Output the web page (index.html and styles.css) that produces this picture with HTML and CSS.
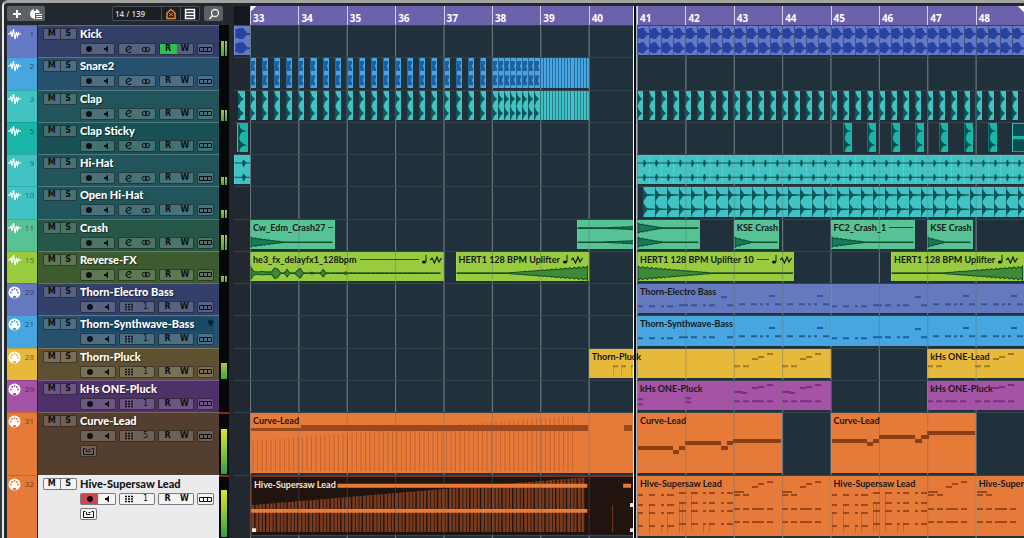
FILE: index.html
```html
<!DOCTYPE html>
<html lang="en">
<head>
    <meta charset="UTF-8">
    <meta name="viewport" content="width=device-width, initial-scale=1.0">
    <title>Project</title>
    <link rel="stylesheet" href="styles.css">
</head>
<body>
    <main class="window">
        <!-- Track list -->
        <section class="panel">
            <div class="toolbar">
                <div class="tool-group">
                    <button class="tool" aria-label="Add track">
                        <svg width="12" height="12" viewBox="0 0 12 12"><path d="M6 2v8M2 6h8" stroke="#fff" stroke-width="2"/></svg>
                    </button>
                    <button class="tool" aria-label="Track presets">
                        <svg width="14" height="12" viewBox="0 0 14 12"><circle cx="6" cy="6" r="5" fill="#fff"/><path d="M5 0v3h2V0z" fill="#5d6163"/><path d="M6 5h8v7H6z" fill="#5d6163"/><path d="M7 6.500h6M7 8.500h6M7 10.500h6" stroke="#fff" stroke-width="1.200"/></svg>
                    </button>
                </div>
                <div class="visibility">
                    <span class="count">14 / 139</span>
                    <button class="tool dark" aria-label="Track visibility">
                        <svg width="12" height="12" viewBox="0 0 12 12"><path d="M2 10.500V5l4-3.500L10 5v5.500z" fill="none" stroke="#e8872c" stroke-width="1.500"/><path d="M4 8l4-3M4 5l4 3" stroke="#e8872c"/></svg>
                    </button>
                    <button class="tool dark" aria-label="Track list">
                        <svg width="12" height="12" viewBox="0 0 12 12"><path d="M1.500 1.500h9v9h-9zM2 4.500h8M2 7.500h8" fill="none" stroke="#fff" stroke-width="1.400"/></svg>
                    </button>
                </div>
                <button class="tool search" aria-label="Find tracks">
                    <svg width="12" height="12" viewBox="0 0 12 12"><circle cx="7" cy="5" r="3.500" fill="none" stroke="#eee" stroke-width="1.300"/><path d="M4.500 7.500L1.500 11" stroke="#eee" stroke-width="1.500"/></svg>
                </button>
            </div>
            <div class="rows" id="tracks"></div>
        </section>

        <!-- Arrangement -->
        <section class="arrange">
            <div class="ruler">
                <div class="ruler-start"></div>
                <ol class="bars" id="bars"></ol>
            </div>
            <div class="rows" id="lanes"></div>
            <div class="cursor-area"><div class="cursor" id="cursor"></div></div>
        </section>
    </main>
    <script src="app.js"></script>
</body>
</html>
```
FILE: styles.css
```css
* {
    box-sizing: border-box;
}
body {
    margin: 0;
    height: 100vh;
    overflow: hidden;
    background: #34383b;
    font-family: "Open Sans", "Noto Sans", sans-serif;
    font-weight: 700;
}
button {
    margin: 0;
    padding: 0;
    border: 0;
    background: none;
    color: inherit;
    font: inherit;
    cursor: pointer;
    display: flex;
    align-items: center;
    justify-content: center;
}
svg {
    display: block;
}
.window {
    display: flex;
    gap: 5px;
    height: 100vh;
    margin-left: 2px;
    padding: 3px 0 0 3px;
    background: #22282f;
    border-top: 3px solid #a3a49f;
    border-left: 2px solid #e6e8e8;
    border-top-left-radius: 6px;
}
.panel,
.arrange {
    display: flex;
    flex-direction: column;
}
.panel {
    width: 222px;
    flex: none;
}
.arrange {
    flex: 1;
    min-width: 0;
    position: relative;
}
.rows {
    flex: 1;
    min-height: 0;
    display: grid;
    grid-template-rows: repeat(12, minmax(0, 1fr)) 63px 63px;
}

/* Toolbar */
.toolbar {
    height: 19px;
    display: flex;
    align-items: flex-start;
}
.tool-group,
.visibility {
    display: flex;
    height: 15px;
    border-radius: 2px;
}
.tool-group {
    width: 38px;
    background: #5d6163;
}
.tool {
    flex: 1;
    height: 15px;
}
.visibility {
    width: 88px;
    margin-left: auto;
    border: 1px solid #4b5054;
    background: #1b1f23;
}
.visibility .tool {
    height: 13px;
    border-left: 1px solid #4b5054;
}
.count {
    width: 48px;
    padding-left: 2px;
    color: #d5d8da;
    font-size: 8px;
    font-weight: 600;
    line-height: 13px;
}
.search {
    flex: none;
    width: 19px;
    margin: 0 6px 0 4px;
    background: #5d6163;
    border-radius: 2px;
}

/* Track colours */
.kick { --clip: #6679c4; --head: #333f67; --ink: #2743a0; }
.sky { --clip: #47a5df; --head: #26506b; --ink: #1b5fa5; }
.aqua { --clip: #42c3c3; --head: #21545b; --ink: #0d5558; }
.teal { --clip: #19b7a9; --head: #195256; --ink: #0a4d4d; }
.mint { --clip: #57c293; --head: #265647; --ink: #187a58; }
.lime { --clip: #98cb3e; --head: #3d5b2f; --ink: #3f8a35; }
.indigo { --clip: #6579be; --head: #33406a; --ink: #3a4fa0; }
.amber { --clip: #e6b93a; --head: #5d5131; --ink: #a07a26; }
.violet { --clip: #a553a5; --head: #4d3168; --ink: #7b2f84; }
.orange { --clip: #e67a39; --head: #543e2f; --ink: #9c481d; }

/* Track header */
.track {
    display: grid;
    grid-template-columns: 30px 1px minmax(0, 1fr) 10px;
    min-height: 0;
    overflow: hidden;
}
.strip {
    display: flex;
    justify-content: space-between;
    padding: 2px 3px 0 1px;
    background: var(--clip);
    border-top: 1px solid rgba(0, 0, 0, 0.15);
    color: rgba(0, 0, 0, 0.55);
    font-size: 8px;
    font-weight: 400;
    line-height: 12px;
}
.info {
    grid-column: 3;
    display: grid;
    grid-template-columns: 34px minmax(0, 1fr);
    column-gap: 3px;
    align-content: start;
    padding: 1px 5px 0 5px;
    background: var(--head);
    border-top: 1px solid rgba(255, 255, 255, 0.22);
    color: #fff;
}
.mute-solo {
    display: flex;
    height: 12px;
    margin-top: 1px;
    background: rgba(255, 255, 255, 0.18);
    border: 1px solid rgba(0, 0, 0, 0.5);
    border-radius: 2px;
    color: #0d1114;
}
.mute-solo button {
    flex: 1;
    font-family: "DejaVu Sans", sans-serif;
    font-size: 8px;
    line-height: 10px;
}
.mute-solo button + button {
    border-left: 1px solid rgba(0, 0, 0, 0.5);
}
.name {
    display: flex;
    justify-content: space-between;
    height: 15px;
    font-family: Lato, "Open Sans", sans-serif;
    font-size: 11px;
    font-weight: 900;
    line-height: 13px;
    white-space: nowrap;
    text-shadow: 1px 1px 1px rgba(0, 0, 0, 0.5);
}
.name.hover {
    padding-right: 1px;
    background: rgba(0, 60, 100, 0.35);
}
.arrow {
    color: #0c1a24;
    font-family: "DejaVu Sans", sans-serif;
    font-size: 7px;
}
.controls {
    grid-column: 2;
    display: flex;
    gap: 3px;
    margin-top: 1px;
}
.group {
    display: flex;
    width: 36px;
    height: 12px;
    background: rgba(255, 255, 255, 0.18);
    border: 1px solid rgba(0, 0, 0, 0.5);
    border-radius: 2px;
    color: #0d1114;
    font-family: "DejaVu Sans", sans-serif;
    font-size: 8px;
    line-height: 10px;
}
.group button,
.group span {
    flex: 1;
    display: flex;
    align-items: center;
    justify-content: center;
}
.group span {
    font-weight: 400;
}
.group.wide {
    width: 38px;
}
.group.small {
    width: 17px;
}
.group .on {
    background: #2fc04c;
}
.group .armed {
    background: #d24550;
}
.extra {
    margin-top: 3px;
}
.selected .info {
    background: #ebebee;
    color: #14161a;
}
.selected .name {
    text-shadow: none;
}
.selected .group,
.selected .mute-solo {
    background: #f4f4f5;
}
.meter {
    display: flex;
    align-items: flex-end;
    gap: 1px;
    padding: 0 2px 1px;
    background: #050708;
}
.meter i {
    flex: 1;
    background: linear-gradient(#a5c92f, #3fa745);
}
.meter.clipped {
    border-top: 2px solid #8b2a1c;
}
.meter.clipped i {
    background: linear-gradient(#dfe22c, #7fc436 55%, #2f9b48);
}

/* Ruler */
.ruler {
    display: flex;
    height: 19px;
}
.ruler-start {
    width: 16px;
    background: #14181c;
}
.bars {
    flex: 1;
    display: grid;
    grid-template-columns: repeat(16, minmax(0, 1fr));
    margin: 0;
    padding: 0;
    list-style: none;
    background: linear-gradient(135deg, #fff 4px, transparent 5px), linear-gradient(225deg, #fff 4px, transparent 5px), #6c61ab;
    color: #fff;
    font-size: 10px;
    line-height: 25px;
}
.bars li {
    padding-left: 2px;
    border-left: 1px solid #d5d0ea;
    height: 19px;
}

/* Lanes */
.lane {
    display: grid;
    grid-template-columns: 16px minmax(0, 1fr);
    min-height: 0;
    border-top: 1px solid #35444d;
}
.before,
.grid {
    padding: 0 0 2px;
    min-height: 0;
    overflow: hidden;
}
.before {
    display: flex;
    justify-content: flex-end;
}
.before .clip {
    width: 16px;
}
.before .clip.short {
    width: 7px;
    margin-right: 5px;
}
.before .clip.mid {
    width: 11px;
    margin-right: 2px;
}
.grid {
    position: relative;
    display: grid;
    grid-template-columns: repeat(256, minmax(0, 1fr));
    grid-template-rows: minmax(0, 1fr);
    background: linear-gradient(90deg, #74838c 1px, transparent 1px) 0 0 / calc(100% / 16) 100% #20313c;
}
.grid::after {
    content: "";
    position: absolute;
    inset: 0;
    background: linear-gradient(90deg, rgba(90, 105, 110, 0.4) 1px, transparent 1px) 0 0 / calc(100% / 16) 100%;
}
.clip {
    grid-row: 1;
    display: grid;
    grid-template-rows: minmax(0, 1fr);
    overflow: hidden;
    min-width: 0;
    background: var(--clip);
    box-shadow: inset 1px 0 rgba(255, 255, 255, 0.15);
    color: #15181a;
    font-family: Lato, "Open Sans", sans-serif;
    font-size: 9px;
    font-weight: 700;
    line-height: 16px;
    white-space: nowrap;
}
.clip.tile {
    box-shadow: inset 1px 0 rgba(0, 20, 60, 0.4);
}
.clip > svg,
.clip-label {
    grid-area: 1 / 1;
    min-width: 0;
}
.clip > svg {
    width: 100%;
    height: 100%;
    fill: var(--ink);
}
.clip .line {
    stroke: var(--ink);
    fill: none;
    stroke-width: 2;
}
.clip .thick {
    stroke: #8a3f18;
    fill: none;
    stroke-width: 4;
}
.clip .thin {
    stroke: var(--ink);
    fill: none;
    stroke-width: 1;
    opacity: 0.45;
}
.mint .clip > svg,
.lime .clip > svg {
    stroke: rgba(0, 50, 30, 0.75);
    stroke-width: 1;
}
.clip-label {
    display: flex;
    align-items: center;
    gap: 3px;
    align-self: start;
    height: 16px;
    padding: 0 2px 0 3px;
    z-index: 1;
}
.clip-label .rule {
    flex: 1;
    height: 1px;
    background: #24452f;
}
.clip-label svg {
    flex: none;
}
.clip.dark {
    background: #21140f;
    border: 1px solid #6d3519;
    color: #f7e6dc;
}

/* Project cursor */
.cursor-area {
    position: absolute;
    inset: 0 0 0 16px;
    pointer-events: none;
}
.cursor {
    position: absolute;
    top: 0;
    bottom: 0;
    width: 4px;
    border-left: 1px solid #fff;
    border-right: 1px solid #b4babd;
    background: #0a0c0e;
}
```
FILE: app.js
```js
// One column of the lane grid is a 16th note, drawn about 3px wide
const STEP = 3.023;

const audioIcon = '<svg width="13" height="12" viewBox="0 0 13 12"><path d="M0 6h2l1-2 1 5 1.500-8 1.500 10 1.500-7 1 4 1-3 .7 1H13" fill="none" stroke="#fff" stroke-width="1.200"/></svg>';
const midiIcon = '<svg width="13" height="13" viewBox="0 0 13 13"><circle cx="6.500" cy="6.500" r="6" fill="#fff"/><g fill="var(--clip)"><circle cx="3" cy="6.500" r=".9"/><circle cx="4.200" cy="4" r=".9"/><circle cx="6.500" cy="3" r=".9"/><circle cx="8.800" cy="4" r=".9"/><circle cx="10" cy="6.500" r=".9"/><path d="M5 10h3v2H5z"/></g></svg>';
const icons = {
    record: '<svg width="8" height="8" viewBox="0 0 8 8"><circle cx="4" cy="4" r="3" fill="#0d1114"/></svg>',
    monitor: '<svg width="8" height="8" viewBox="0 0 8 8"><path d="M2 3h1.500L6 .5v7L3.500 5H2z" fill="#0d1114"/></svg>',
    edit: '<svg width="9" height="9" viewBox="0 0 9 9"><path d="M7.500 6.500A3 3 0 1 1 7 2.200Q7.500 4 2.500 5.200" fill="none" stroke="#0d1114" stroke-width="1.100"/></svg>',
    stereo: '<svg width="10" height="7" viewBox="0 0 10 7"><circle cx="3.500" cy="3.500" r="2.200" fill="none" stroke="#0d1114"/><circle cx="6.500" cy="3.500" r="2.200" fill="none" stroke="#0d1114"/></svg>',
    pads: '<svg width="8" height="8" viewBox="0 0 8 8"><path d="M0 1.500h8M0 4h8M0 6.500h8" stroke="#0d1114" stroke-width="1.500" stroke-dasharray="2 1"/></svg>',
    lanes: '<svg width="13" height="7" viewBox="0 0 13 7"><path d="M.5 1.500h12v4H.5zM4.500 1v5M8.500 1v5" fill="none" stroke="#0d1114"/></svg>',
    chain: '<svg width="11" height="7" viewBox="0 0 11 7"><path d="M2.500 .5h-2v6h10v-6h-2M3.500 1v2.500h4M5.500 1.500h2" fill="none" stroke="#0d1114"/></svg>',
    note: '<svg width="5" height="9" viewBox="0 0 5 9"><ellipse cx="2" cy="7" rx="2" ry="1.500"/><path d="M4 7V0" stroke="#15181a"/></svg>',
    warp: '<svg width="12" height="9" viewBox="0 0 12 9"><path d="M0 5l2-2 2.500 5L7 2l2 5 2.500-4" fill="none" stroke="#15181a" stroke-width="1.200"/></svg>'
};

// Filled waveform from x0 to x1 around cy; amp(t) is the half height for t in 0..1
function wave(x0, x1, cy, amp) {
    let top = '', bottom = '';
    for (let x = x0, i = 0; x <= x1; x += 1.5, i++) {
        const a = Math.max(0.3, amp((x - x0) / (x1 - x0)) * (1 - (i % 3) * 0.12));
        top += `L${x.toFixed(1)} ${(cy - a).toFixed(1)}`;
        bottom = `L${x.toFixed(1)} ${(cy + a).toFixed(1)}` + bottom;
    }
    return `<path d="M${x0} ${cy}${top}${bottom}z"/>`;
}

// Notes as [x, y, width], shift moves them along the clip
function notes(list, cls = 'line', shift = 0) {
    return `<path class="${cls}" d="${list.map(([x, y, w]) => `M${x + shift} ${y}h${w}`).join('')}"/>`;
}

const tiles = {
    kick: '<path d="M1 3h2l1-1h3l1 2 2 3h2v2h-2l-2 2-1 2H4l-1-1H1zM1 17h2l1-1h3l1 2 2 3h2v2h-2l-2 2-1 2H4l-1-1H1z"/>',
    snare: '<path d="M1 3h4v3l-1 1v2l1 1v3H1zM1 17h4v3l-1 1v2l1 1v3H1z"/>',
    clap: '<path d="M0 2h1l1 3 3 3-3 3-1 3H0zM0 16h1l1 3 3 3-3 3-1 3H0z"/>',
    sticky: '<path d="M1 1h1l1 4 2 2 4 1-4 1-2 2-1 4 1 3 2 2 4 2-4 1-2 2-1 4H1z"/>',
    open: '<path d="M0 2l2 2 2 3 8 .5v1L4 9l-2 3-2 2zM0 16l2 2 2 3 8 .5v1L4 23l-2 3-2 2z"/>',
    hat: '<path d="M0 7.500h6l1-3 1 1 1 2h3v1H9l-1 2-1 2-1-4H0zM0 21.500h6l1-3 1 1 1 2h3v1H9l-1 2-1 2-1-4H0z"/>',
    flat: ''
};

function tile(kind, start, span, count, every) {
    return Array.from({ length: count }, (_, i) => ({ start: start + i * every, span, art: tiles[kind], tile: true, width: kind === 'sticky' ? 10 : span * 3 }));
}

const decay = t => 5 * Math.pow(1 - Math.min(1, t * 2.2), 1.2);
const crash = (w, cy = 22) => wave(1, w, cy, decay);
const riser = w => wave(1, w, 21, t => t < 0.35 ? 0.3 : 7 * (t - 0.35) / 0.65);
const delayFx = wave(1, 191, 21, t => {
    const hits = [[0, 6], [0.06, 3], [0.13, 7], [0.19, 4], [0.255, 6], [0.32, 2], [0.38, 4], [0.5, 2]];
    return Math.max(0.4, ...hits.map(([p, h]) => h - Math.abs(t - p) * 260), t < 0.15 ? 1.5 : 0);
});

const bassA = [[1, 22, 5], [12, 22, 6], [24, 22, 3], [30, 22, 6], [42, 21, 9], [54, 21, 6], [66, 21, 3], [72, 21, 6], [90, 21, 6]];
const bassB = [[6, 20, 6], [18, 20, 6], [27, 20, 3], [33, 20, 3], [36, 12, 6], [42, 20, 6]];
const bass = high => notes(bassA) + notes(bassB, 'line', 96) + notes(bassB, 'line', 144) + (high ? notes([[84, 13, 6]]) : '');
const steps = [[18, 10, 6], [24, 8, 6], [33, 5, 6]];
const pluck = [[0, 17, 6], [9, 17, 6], ...steps];
const kRun = [[0, 20, 6], [9, 20, 6], [18, 20, 12], [33, 20, 6], [18, 7, 6], [24, 6, 6], [33, 4, 6]];
const kChord = [[0, 11, 9], [7, 12, 6]];

const chords = [];
[[1, 5], [12, 6], [24, 3], [30, 7]].forEach(([x, w]) => [19, 29, 37, 50].forEach(y => chords.push([x, y, w])));
[[42, 7], [54, 7], [66, 3], [72, 6], [84, 3], [90, 6]].forEach(([x, w]) => [17, 27, 35, 48].forEach(y => chords.push([x, y, w])));
const tails = '<path class="thin" d="M1.500 37v20M12.500 29v28M24.500 50v7M30.500 37v20M42.500 27v30M45.500 27v28M54.500 17v38M66.500 48v9M72.500 46v10"/>';
const hiveRun = [[0, 16, 10], [0, 19, 6], [9, 19, 6]];
[33, 46].forEach(y => hiveRun.push([0, y, 6], [9, y, 6], [18, y, 12], [33, y, 6]));
const hiveSteps = [[18, 11, 6], [24, 8, 6], [33, 6, 6]];
const hive = notes(chords) + tails + notes(hiveRun.concat(hiveSteps), 'line', 97);

let curveBuild = '', hiveBuild = '';
for (let x = 3; x < 326; x += 4.5) {
    curveBuild += `M${x} ${(28 - x * 0.078).toFixed(1)}V58`;
}
for (let x = 1, i = 0; x < 334; x += 3.6, i++) {
    hiveBuild += `M${x.toFixed(1)} ${(29 - x * 0.086).toFixed(1)}V57h${i % 3 ? 2.8 : 2.2}V${(29 - x * 0.086).toFixed(1)}z`;
}

const tracks = [
    { no: 1, name: 'Kick', color: 'kick', level: 15, read: true, before: ['', tiles.kick, 12],
      clips: tile('kick', 128, 4, 32, 4) },
    { no: 2, name: 'Snare2', color: 'sky', level: 0,
      clips: [...tile('snare', 0, 2, 20, 4), ...tile('snare', 80, 2, 8, 2), ...tile('flat', 96, 1, 16, 1)] },
    { no: 3, name: 'Clap', color: 'aqua', level: 11, before: ['short', tiles.clap, 6],
      clips: [...tile('clap', 0, 2, 20, 4), ...tile('clap', 80, 2, 8, 2), ...tile('flat', 96, 1, 16, 1), ...tile('clap', 128, 2, 32, 4)] },
    { no: 5, name: 'Clap Sticky', color: 'teal', level: 0, before: ['mid', tiles.sticky, 10],
      clips: [...tile('sticky', 196, 3, 7, 8), { start: 252, span: 4, art: '<path d="M1 1h11v12H1zM1 16h11v12H1z"/>' }] },
    { no: 9, name: 'Hi-Hat', color: 'aqua', level: 8, before: ['', tiles.hat, 12],
      clips: Array.from({ length: 32 }, (_, i) => ({ start: 128 + i * 4, span: 4, art: tiles.hat, width: 12 })) },
    { no: 10, name: 'Open Hi-Hat', color: 'aqua', level: 8,
      clips: [...tile('open', 130, 4, 31, 4), { start: 254, span: 2, art: tiles.open, tile: true }] },
    { no: 11, name: 'Crash', color: 'mint', level: 15, clips: [
        { start: 0, span: 28, label: 'Cw_Edm_Crash27', rule: true, art: crash(83) },
        { start: 108, span: 20, art: wave(1, 60, 8, t => t * t * 2) + wave(1, 60, 22, t => t * t * 2) },
        { start: 128, span: 21, art: crash(62, 8) + crash(62) },
        { start: 160, span: 15, label: 'KSE Crash', art: crash(44) },
        { start: 192, span: 28, label: 'FC2_Crash_1', rule: true, art: crash(83) },
        { start: 224, span: 15, label: 'KSE Crash', art: crash(44) }] },
    { no: 15, name: 'Reverse-FX', color: 'lime', level: 6, clips: [
        { start: 0, span: 64, label: 'he3_fx_delayfx1_128bpm', rule: true, warp: true, art: delayFx },
        { start: 68, span: 44, label: 'HERT1 128 BPM Uplifter', warp: true, art: riser(132) },
        { start: 128, span: 52, label: 'HERT1 128 BPM Uplifter 10', rule: true, warp: true, art: wave(1, 156, 21, t => 7 * Math.max(0, 1 - t * 2)) },
        { start: 212, span: 44, label: 'HERT1 128 BPM Uplifter', warp: true, art: riser(132) }] },
    { no: 20, name: 'Thorn-Electro Bass', color: 'indigo', midi: 1, level: 0, clips: [
        { start: 128, span: 64, label: 'Thorn-Electro Bass', art: bass(true) },
        { start: 192, span: 64, art: bass(true) }] },
    { no: 21, name: 'Thorn-Synthwave-Bass', color: 'sky', midi: 1, level: 0, hover: true, clips: [
        { start: 128, span: 64, label: 'Thorn-Synthwave-Bass', art: bass(false) },
        { start: 192, span: 64, art: bass(true) }] },
    { no: 28, name: 'Thorn-Pluck', color: 'amber', midi: 1, level: 16, clips: [
        { start: 112, span: 80, label: 'Thorn-Pluck', art: notes([[24, 17, 5], [32, 17, 5], [42, 17, 6]]) + '<path class="thin" d="M24.500 17v10M32.500 17v10M42.500 17v10"/>' + notes(pluck, 'line', 145) + notes(pluck, 'line', 193) },
        { start: 224, span: 32, label: 'kHs ONE-Lead', art: notes([[1, 17, 5], [9, 17, 6]]) + notes(pluck, 'line', 48) }] },
    { no: 29, name: 'kHs ONE-Pluck', color: 'violet', midi: 1, level: 0, clips: [
        { start: 128, span: 64, label: 'kHs ONE-Pluck', art: notes([[1, 18, 5], [1, 23, 5], [48, 17, 6], [48, 21, 6]]) + notes(kRun.concat(kChord), 'line', 97) + notes(kRun.concat(kChord), 'line', 145) },
        { start: 224, span: 32, label: 'kHs ONE-Pluck', art: notes([[1, 20, 5], [9, 20, 6], [18, 20, 12], [33, 20, 6]]) + notes(kRun, 'line', 48) }] },
    { no: 31, name: 'Curve-Lead', color: 'orange', midi: 5, level: 45, tall: true, clips: [
        { start: 0, span: 128, label: 'Curve-Lead', art: `<path class="thin" d="${curveBuild}"/><path d="M1 15h50v-3h287v6H1zM374 12h8v6h-8z"/>` },
        { start: 128, span: 48, label: 'Curve-Lead', art: notes([[1, 35, 35], [36, 39, 6], [42, 35, 6], [48, 30, 36], [84, 35, 7], [90, 30, 6], [96, 28, 48]], 'thick') },
        { start: 192, span: 48, label: 'Curve-Lead', art: notes([[1, 28, 35], [36, 31, 6], [42, 28, 6], [48, 24, 36], [84, 28, 7], [90, 24, 8], [96, 20, 48]], 'thick') }] },
    { no: 32, name: 'Hive-Supersaw Lead', color: 'orange', midi: 1, level: 47, tall: true, selected: true, clips: [
        { start: 0, span: 128, label: 'Hive-Supersaw Lead', dark: true, art: `<path fill="#793a1d" d="${hiveBuild}M363 29h1v28h-1z"/><path fill="#e67a39" d="M87 7h251v4H87zM0 33h338v4H0zM374 7h8v4h-8z"/><path fill="#f7e6dc" d="M1 53h4v4H1zM381 27h4v4h-4zM381 53h4v4h-4z"/>` },
        { start: 128, span: 64, label: 'Hive-Supersaw Lead', art: hive + notes(hiveRun.concat(hiveSteps), 'line', 145) },
        { start: 192, span: 48, label: 'Hive-Supersaw Lead', art: hive },
        { start: 240, span: 16, label: 'Hive-Supersaw Lead', art: notes(hiveRun, 'line', 1) }] }
];

function art(content, width, height) {
    return `<svg viewBox="0 0 ${width} ${height}" preserveAspectRatio="none">${content}</svg>`;
}

function clipHtml(c, height) {
    let label = '';
    if (c.label) {
        label = `<div class="clip-label"><span>${c.label}</span>${c.rule ? '<span class="rule"></span>' : ''}${c.warp ? icons.note + icons.warp : ''}</div>`;
    }
    const cls = (c.tile ? ' tile' : '') + (c.dark ? ' dark' : '');
    return `<div class="clip${cls}" style="grid-column: ${c.start + 1} / span ${c.span}">${art(c.art, c.width || c.span * STEP, height)}${label}</div>`;
}

function headerHtml(t) {
    const middle = t.midi
        ? `<div class="group"><button aria-label="Channel map">${icons.pads}</button><span>${t.midi}</span></div>`
        : `<div class="group wide"><button aria-label="Edit channel">${icons.edit}</button><button aria-label="Stereo">${icons.stereo}</button></div>`;
    const bar = `<i style="height: ${t.level}px"></i>`;
    return `<div class="track ${t.color}${t.selected ? ' selected' : ''}">
        <div class="strip">${t.midi ? midiIcon : audioIcon}<span>${t.no}</span></div>
        <div class="info">
            <div class="mute-solo"><button aria-label="Mute">M</button><button aria-label="Solo">S</button></div>
            <div class="name${t.hover ? ' hover' : ''}"><span>${t.name}</span>${t.hover ? '<span class="arrow">▼</span>' : ''}</div>
            <div class="controls">
                <div class="group"><button class="${t.selected ? 'armed' : ''}" aria-label="Record">${icons.record}</button><button aria-label="Monitor">${icons.monitor}</button></div>
                ${middle}
                <div class="group"><button class="${t.read ? 'on' : ''}" aria-label="Read">R</button><button aria-label="Write">W</button></div>
                <div class="group small"><button aria-label="Lanes">${icons.lanes}</button></div>
            </div>
            ${t.tall ? `<div class="controls extra"><div class="group small"><button aria-label="Chord track">${icons.chain}</button></div></div>` : ''}
        </div>
        <div class="meter${t.tall ? ' clipped' : ''}">${t.midi ? bar : bar + bar}</div>
    </div>`;
}

function laneHtml(t) {
    const height = t.tall ? 60 : 29;
    const before = t.before ? `<div class="clip ${t.before[0]}">${art(t.before[1], t.before[2], height)}</div>` : '';
    return `<div class="lane ${t.color}">
        <div class="before">${before}</div>
        <div class="grid">${t.clips.map(c => clipHtml(c, height)).join('')}</div>
    </div>`;
}

document.getElementById('tracks').innerHTML = tracks.map(headerHtml).join('');
document.getElementById('lanes').innerHTML = tracks.map(laneHtml).join('');
document.getElementById('bars').innerHTML = Array.from({ length: 16 }, (_, i) => `<li>${33 + i}</li>`).join('');

// Cursor position in 16ths from bar 33
document.getElementById('cursor').style.left = (126.6 / 256 * 100) + '%';
```
